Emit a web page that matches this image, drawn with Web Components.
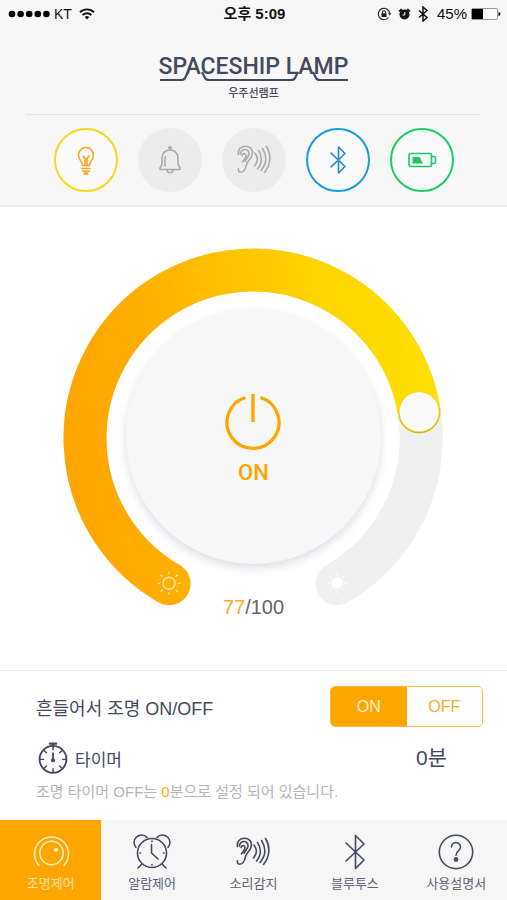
<!DOCTYPE html>
<html lang="ko">
<head>
<meta charset="utf-8">
<meta name="viewport" content="width=device-width, initial-scale=1">
<title>SPACESHIP LAMP</title>
<style>
    :root {
        --ink: #434a5e;
        --accent: #ffa500;
        --panel: #f7f7f7;
    }
    body {
        margin: 0;
        background: #fff;
        color: var(--ink);
        font-family: "Liberation Sans", "Noto Sans CJK KR", sans-serif;
    }
</style>
</head>
<body>
<lamp-app></lamp-app>

<script>
// every icon is drawn on a 38x38 grid, centre 19,19
const ICONS = {
    bulb: `
        <path d="M15.5 24.500c0-4-4-5.500-4-10.500a7.500 7.500 0 0 1 15 0c0 5-4 6.500-4 10.500z"/>
        <path d="M16 15l2 2.500v6M22 15l-2 2.500v6M18 17.500h2M15 27.500h8M15.500 30.300h7"/>
        <path d="M17.500 32h3v1h-3z" fill="currentColor"/>`,
    bell: `
        <path d="M19 8.500v-2M10 28.500c-1.500 0-1.500-2 0-3 1.500-2 1-5 1-8.500 0-5 3.500-8 8-8s8 3 8 8c0 3.500-.5 6.500 1 8.500 1.500 1 1.500 3 0 3z"/>
        <path d="M16 28.800a3 3 0 0 0 6 0M14 25c0-3-.5-7 .5-9.500"/>
        <circle cx="19" cy="7" r="1.200" fill="currentColor"/>`,
    ear: `
        <path d="M3.500 13.500C2.500 8 6.500 5.200 10.500 5.200c5 0 8 4 6.500 9-1.200 4-4.500 5.500-5.500 9.500-1 4.500-2.500 7.500-5.500 7.500-2 0-3-1.500-2.500-3.500"/>
        <path d="M5.500 13c0-3 2.500-4.800 5-4.500 3 .3 4.300 3.300 3 6.300-1 2.300-2.500 3-3.500 5.500"/>
        <path d="M7 14.500c1-2.500 3.500-2.500 4 0 .3 2.500-2 3.500-3.500 6.500"/>
        <path d="M20 12c3 4 3 9-.5 13M23.500 9.500c4 5.500 4 13-1 18.500M27.500 7.500c4.500 7 4.500 15-1.500 22M31.500 5.500c5 8 4.500 18-2 26"/>`,
    bluetooth: `<path d="M12 12l14 13.500-6.500 6.500v-26l6.500 6.500L12 26"/>`,
    "bluetooth-tab": `<path d="M10 10l18 17-8.500 8.500v-33L28 11 10 28"/>`,
    battery: `
        <rect x="6" y="12.500" width="22.500" height="13" rx="2"/>
        <path d="M28.500 15.500h2.500a1.500 1.500 0 0 1 1.500 1.500v4a1.500 1.500 0 0 1-1.500 1.500h-2.500"/>
        <path d="M9.500 16h7l3.500 6.500H9.500z" fill="currentColor" stroke="none"/>`,
    knob: `
        <circle cx="19.500" cy="20" r="11.700"/>
        <path d="M7 32.500a17 17 0 1 1 25 0"/>
        <circle cx="24" cy="17" r="1.300" fill="currentColor"/>`,
    alarm: `
        <circle cx="19" cy="20" r="14.500"/>
        <path d="M3 14.500A7 7 0 1 1 14 4.500M35 14.500A7 7 0 1 0 24 4.500"/>
        <path d="M9 31l-4 4M29 31l4 4M18.500 11.500V20l6.500 6"/>
        <path d="M19 8v.5M19 31.500v.5M7 20h.5M30.500 20h.5"/>`,
    help: `
        <circle cx="19" cy="19" r="16.700"/>
        <path d="M14.500 14a4.500 4.500 0 1 1 7 3.800c-1.800 1.200-2.500 2-2.500 4.500"/>
        <circle cx="19" cy="26.500" r="1.600" fill="currentColor"/>`,
    stopwatch: `
        <circle cx="19" cy="20.500" r="15" stroke-width="2.100"/>
        <path d="M15.500 3h7M19 3v3" stroke-width="2.600"/>
        <path d="M19 6v4M19 31v4M4.500 20.500h4M29.500 20.500h4M9 10.500l2.600 2.600M29 10.500l-2.600 2.600M9 30.500l2.600-2.600M29 30.500l-2.600-2.600"/>
        <path d="M19 13.500v7" stroke-width="2"/>
        <circle cx="19" cy="21.500" r="1.500" fill="currentColor"/>`
};

class LampIcon extends HTMLElement {
    connectedCallback() {
        this.attachShadow({ mode: "open" });
        this.shadowRoot.innerHTML = `
        <style>
        :host { display: block; width: 38px; height: 38px; flex: none; }
        svg {
            display: block;
            width: 100%;
            height: 100%;
            fill: none;
            stroke: currentColor;
            stroke-width: var(--icon-stroke, 1.600);
            stroke-linecap: round;
            stroke-linejoin: round;
        }
        </style>
        <svg viewBox="0 0 38 38" aria-hidden="true">${ICONS[this.getAttribute("name")]}</svg>
        `;
    }
}
customElements.define("lamp-icon", LampIcon);

class PhoneStatus extends HTMLElement {
    constructor() {
        super();
        this.attachShadow({ mode: "open" });
        this.shadowRoot.innerHTML = `
        <style>
        :host {
            display: grid;
            grid-template-columns: 1fr auto 1fr;
            align-items: center;
            height: 28px;
            padding: 0 6px 0 8px;
            color: #111;
            font-size: 15px;
            line-height: 20px;
        }
        div { display: flex; align-items: center; gap: 4px; }
        .right { justify-content: flex-end; }
        .carrier { font-size: 14px; }
        time { font-weight: 600; }
        svg { display: block; flex: none; }
        </style>
        <div>
            <svg width="42" height="8" fill="#000"><circle cx="4" cy="4" r="3.300"/><circle cx="12.600" cy="4" r="3.300"/><circle cx="21.200" cy="4" r="3.300"/><circle cx="29.800" cy="4" r="3.300"/><circle cx="38.400" cy="4" r="3.300"/></svg>
            <span class="carrier">KT</span>
            <svg width="22" height="12" viewBox="0 0 22 12" fill="none" stroke="#111" stroke-width="1.900"><path d="M4 4.200a10 10 0 0 1 14 0M6.500 7a6.500 6.500 0 0 1 9 0"/><path d="M8.700 9a3.300 3.300 0 0 1 4.600 0L11 11.500z" fill="#111" stroke="none"/></svg>
        </div>
        <time>오후 5:09</time>
        <div class="right">
            <svg width="14" height="14" viewBox="0 0 14 14" fill="none" stroke="#222" stroke-width="1.100"><path d="M11.500 10.500A5.700 5.700 0 1 1 12.700 6.500"/><path d="M11 6.200h3.400l-1.700 2.200z" fill="#222" stroke="none"/><rect x="4.500" y="6.300" width="5" height="3.700" fill="#222" stroke="none"/><path d="M5.500 6.500V5.200a1.500 1.500 0 0 1 3 0v1.300"/></svg>
            <svg width="18" height="14" viewBox="0 0 18 14"><circle cx="9.500" cy="7.500" r="5" fill="#111"/><path d="M4.300 4.500l2.500-2.300M14.700 4.500l-2.500-2.300" stroke="#111" stroke-width="2.200"/><path d="M9.800 5v3H7.500" stroke="#fff" fill="none"/></svg>
            <svg width="12" height="16" viewBox="0 0 12 16" fill="none" stroke="#111" stroke-width="1.500"><path d="M2 4.500l8 7L6 15V1l4 3.500-8 7"/></svg>
            <span>&nbsp;45%</span>
            <svg width="30" height="12" viewBox="0 0 30 12"><rect x=".5" y=".5" width="26" height="11" rx="1.500" fill="#fff" stroke="#999"/><path d="M1 1h11v10H1z"/><path d="M27.500 4v4q2-.5 2-2t-2-2z"/></svg>
        </div>
        `;
    }
}
customElements.define("phone-status", PhoneStatus);

class LampLogo extends HTMLElement {
    constructor() {
        super();
        this.attachShadow({ mode: "open" });
        this.shadowRoot.innerHTML = `
        <style>
        :host { display: flex; flex-direction: column; align-items: center; }
        h1 {
            margin: 0;
            font: 500 23px/24px Roboto, sans-serif;
            white-space: nowrap;
        }
        svg { display: block; margin-top: -8px; }
        p { margin: 1px 0 0; font-size: 11px; line-height: 18px; font-weight: 500; }
        </style>
        <h1>SPACESHIP LAMP</h1>
        <svg width="188" height="12" viewBox="0 0 188 12" fill="none" stroke="currentColor" stroke-width="2.200"><path d="M0 9h21q3 0 4-2l3-6M42 1l3 6q1 2 4 2h82q3 0 4-2l3-6M153 1l3 6q1 2 4 2h28"/></svg>
        <p><slot></slot></p>
        `;
    }
}
customElements.define("lamp-logo", LampLogo);

class StatusBadge extends HTMLElement {
    connectedCallback() {
        this.attachShadow({ mode: "open" });
        this.shadowRoot.innerHTML = `
        <style>
        :host {
            display: grid;
            place-items: center;
            box-sizing: border-box;
            width: 64px;
            height: 64px;
            border-radius: 50%;
            background: #ececec;
            color: #aaa;
        }
        :host([on]) { background: #fafafa; border: 2px solid; }
        :host([icon="bulb"]) { border-color: #fbd421; color: #ffa21c; }
        :host([icon="bluetooth"]) { border-color: #1b9be4; color: #2385dc; }
        :host([icon="battery"]) { border-color: #1dcd62; color: #22c765; }
        </style>
        <lamp-icon name="${this.getAttribute("icon")}"></lamp-icon>
        `;
    }
}
customElements.define("status-badge", StatusBadge);

class LampDial extends HTMLElement {
    constructor() {
        super();
        this.attachShadow({ mode: "open" });
        this.shadowRoot.innerHTML = `
        <style>
        :host {
            display: grid;
            justify-items: center;
            width: 75%;
            max-width: 480px;
        }
        .ring, input, button, output { grid-area: 1 / 1; }
        .ring { display: block; width: 100%; overflow: visible; }
        input {
            align-self: end;
            width: 60%;
            margin: 0;
            opacity: 0;
            pointer-events: none;
        }
        button {
            display: flex;
            flex-direction: column;
            align-items: center;
            justify-content: center;
            gap: 9px;
            align-self: start;
            box-sizing: border-box;
            width: 67%;
            aspect-ratio: 1;
            margin: 16% 0 0;
            padding: 6px 0 0;
            border: 0;
            border-radius: 50%;
            background: #f7f7f8;
            box-shadow: 0 4px 10px #dcdce8;
            color: var(--accent);
            font: 500 22px/26px Roboto, sans-serif;
            cursor: pointer;
        }
        button[aria-pressed="false"] { color: #aaa; }
        output { align-self: end; font-size: 20px; line-height: 24px; color: #666; }
        output b { font-weight: 400; color: #fbab26; }
        </style>
        <svg class="ring" viewBox="0 0 380 371">
            <defs>
                <linearGradient id="glow" gradientUnits="userSpaceOnUse" x1="0" y1="200" x2="360" y2="160">
                    <stop offset="0" stop-color="#ffa500"/>
                    <stop offset=".25" stop-color="#ffae00"/>
                    <stop offset=".5" stop-color="#ffc200"/>
                    <stop offset=".75" stop-color="#ffd400"/>
                    <stop offset="1" stop-color="#ffde00"/>
                </linearGradient>
            </defs>
            <g fill="none" stroke-linecap="round" stroke-width="43">
                <path id="track" stroke="#f0f0f0"/>
                <path id="fill" stroke="url(#glow)"/>
            </g>
            <g stroke="#ffe9b5" stroke-width="1.400" fill="none">
                <circle cx="106" cy="335" r="6"/>
                <path d="M106 326v-2.500M106 344v2.500M97 335h-2.500M115 335h2.500M99.500 328.500l-2-2M112.500 328.500l2-2M99.500 341.500l-2 2M112.500 341.500l2 2"/>
            </g>
            <g stroke="#fafafa" fill="#fff" stroke-width="1.200">
                <circle cx="274" cy="335" r="5.500"/>
                <path d="M274 328v-4M274 342v4M267 335h-4M281 335h4M269 330l-3-3M279 330l3-3M269 340l-3 3M279 340l3 3"/>
            </g>
            <circle id="shade" r="20.500" fill="#cdb51e"/>
            <circle id="knob" r="20" fill="#fafafa" stroke="#ecd21c" stroke-width=".7"/>
        </svg>
        <input type="range" min="0" max="100" value="77" aria-label="밝기">
        <button type="button" aria-pressed="true">
            <svg width="58" height="58" viewBox="0 0 58 58" fill="none" stroke="currentColor" stroke-width="3.300"><path d="M21.500 4.500a26 26 0 1 0 15 0M29 1v28"/></svg>
            <span>ON</span>
        </button>
        <output></output>
        `;
        this.input = this.shadowRoot.querySelector("input");
        this.button = this.shadowRoot.querySelector("button");
        this.ring = this.shadowRoot.querySelector(".ring");
    }

    connectedCallback() {
        this.shadowRoot.getElementById("track").setAttribute("d", this.arc(100));
        this.input.addEventListener("input", () => this.update());
        this.button.addEventListener("click", () => {
            const on = this.button.getAttribute("aria-pressed") !== "true";
            this.button.setAttribute("aria-pressed", on);
            this.button.querySelector("span").innerText = on ? "ON" : "OFF";
        });
        this.ring.addEventListener("pointerdown", (e) => this.drag(e));
        this.ring.addEventListener("pointermove", (e) => {
            if (e.buttons) this.drag(e);
        });
        this.update();
    }

    // 0 sits bottom left, 100 bottom right, 300 degrees between them
    point(value) {
        const a = (120 + value * 3) * Math.PI / 180;
        return [190 + 168 * Math.cos(a), 190 + 168 * Math.sin(a)];
    }

    arc(value) {
        return `M${this.point(0)} A168 168 0 ${value > 60 ? 1 : 0} 1 ${this.point(value)}`;
    }

    drag(e) {
        const box = this.ring.getBoundingClientRect();
        const x = e.clientX - box.left - box.width / 2;
        const y = e.clientY - box.top - box.width / 2;
        const angle = (Math.atan2(y, x) * 180 / Math.PI + 240) % 360;
        this.input.value = angle / 3;
        this.update();
    }

    update() {
        const value = Number(this.input.value);
        const [x, y] = this.point(value);
        this.shadowRoot.getElementById("fill").setAttribute("d", this.arc(Math.max(value, 1)));
        // the round cap hides under the knob
        for (const id of ["knob", "shade"]) {
            const dot = this.shadowRoot.getElementById(id);
            dot.setAttribute("cx", x);
            dot.setAttribute("cy", id === "shade" ? y + 1 : y);
        }
        this.shadowRoot.querySelector("output").innerHTML = `<b>${value}</b>/100`;
    }
}
customElements.define("lamp-dial", LampDial);

class OnOffSwitch extends HTMLElement {
    constructor() {
        super();
        this.attachShadow({ mode: "open" });
        this.shadowRoot.innerHTML = `
        <style>
        :host {
            display: grid;
            grid-template-columns: 1fr 1fr;
            box-sizing: border-box;
            width: 153px;
            height: 41px;
            border: 1px solid #fbb94a;
            border-radius: 5px;
            overflow: hidden;
        }
        button {
            border: 0;
            padding: 0;
            background: #fff;
            color: #fbaa28;
            font: inherit;
            font-size: 16px;
            cursor: pointer;
        }
        button[aria-pressed="true"] { background: var(--accent); color: #fff3d6; }
        </style>
        <button type="button" aria-pressed="true">ON</button>
        <button type="button" aria-pressed="false">OFF</button>
        `;
        const buttons = this.shadowRoot.querySelectorAll("button");
        buttons.forEach((button) => {
            button.addEventListener("click", () => {
                buttons.forEach((b) => b.setAttribute("aria-pressed", b === button));
            });
        });
    }
}
customElements.define("on-off-switch", OnOffSwitch);

class LampSettings extends HTMLElement {
    constructor() {
        super();
        this.attachShadow({ mode: "open" });
        this.shadowRoot.innerHTML = `
        <style>
        :host {
            display: block;
            padding: 15px 24px 18px 36px;
            border-top: 1px solid #eee;
            font-size: 18px;
        }
        .row { display: flex; align-items: center; justify-content: space-between; }
        .timer { height: 32px; margin-top: 15px; }
        .name { display: flex; align-items: center; gap: 5px; font-size: 17px; }
        lamp-icon { width: 34px; height: 34px; }
        .timer button {
            margin: 0 36px 0 0;
            padding: 0;
            border: 0;
            background: none;
            color: inherit;
            font: inherit;
            font-size: 21px;
            line-height: 32px;
            cursor: pointer;
        }
        p { margin: 8px 0 0; font-size: 15px; line-height: 20px; color: #b5b5b5; }
        p b { font-weight: 400; color: #fbab26; }
        </style>
        <div class="row">
            <span>흔들어서 조명 ON/OFF</span>
            <on-off-switch role="group" aria-label="흔들어서 조명"></on-off-switch>
        </div>
        <div class="row timer">
            <span class="name"><lamp-icon name="stopwatch"></lamp-icon>타이머</span>
            <button type="button">0분</button>
        </div>
        <p>조명 타이머 OFF는 <b>0</b>분으로 설정 되어 있습니다.</p>
        `;
    }
}
customElements.define("lamp-settings", LampSettings);

class TabLink extends HTMLElement {
    connectedCallback() {
        this.attachShadow({ mode: "open" });
        this.shadowRoot.innerHTML = `
        <style>
        :host { display: block; color: var(--ink); }
        :host([active]) { background: var(--accent); color: #fff0c4; }
        a {
            display: flex;
            flex-direction: column;
            align-items: center;
            gap: 4px;
            padding: 13px 0 7px;
            color: inherit;
            font-size: 13px;
            line-height: 18px;
            text-decoration: none;
            white-space: nowrap;
        }
        span { opacity: .85; }
        </style>
        <a href="#${this.getAttribute("icon")}">
            <lamp-icon name="${this.getAttribute("icon")}"></lamp-icon>
            <span><slot></slot></span>
        </a>
        `;
    }
}
customElements.define("tab-link", TabLink);

class LampApp extends HTMLElement {
    constructor() {
        super();
        this.attachShadow({ mode: "open" });
        this.shadowRoot.innerHTML = `
        <style>
        :host { display: flex; flex-direction: column; min-height: 100vh; }
        header { background: var(--panel); border-bottom: 2px solid #ececec; }
        lamp-logo { margin: 27px 26px 0; padding-bottom: 12px; border-bottom: 1px solid #e6e6e6; }
        .badges { display: flex; justify-content: center; gap: 20px; padding: 13px 0; }
        main { flex: 1; display: flex; flex-direction: column; }
        .dial { flex: 1; display: flex; justify-content: center; align-items: flex-start; padding: 41px 0; }
        nav { display: grid; grid-template-columns: repeat(5, 1fr); background: #f6f6f7; }
        </style>
        <header>
            <phone-status></phone-status>
            <lamp-logo>우주선램프</lamp-logo>
            <div class="badges">
                <status-badge icon="bulb" on></status-badge>
                <status-badge icon="bell"></status-badge>
                <status-badge icon="ear"></status-badge>
                <status-badge icon="bluetooth" on></status-badge>
                <status-badge icon="battery" on></status-badge>
            </div>
        </header>
        <main>
            <div class="dial"><lamp-dial></lamp-dial></div>
            <lamp-settings></lamp-settings>
        </main>
        <nav>
            <tab-link icon="knob" active>조명제어</tab-link>
            <tab-link icon="alarm">알람제어</tab-link>
            <tab-link icon="ear">소리감지</tab-link>
            <tab-link icon="bluetooth-tab">블루투스</tab-link>
            <tab-link icon="help">사용설명서</tab-link>
        </nav>
        `;
    }
}
customElements.define("lamp-app", LampApp);
</script>
</body>
</html>
